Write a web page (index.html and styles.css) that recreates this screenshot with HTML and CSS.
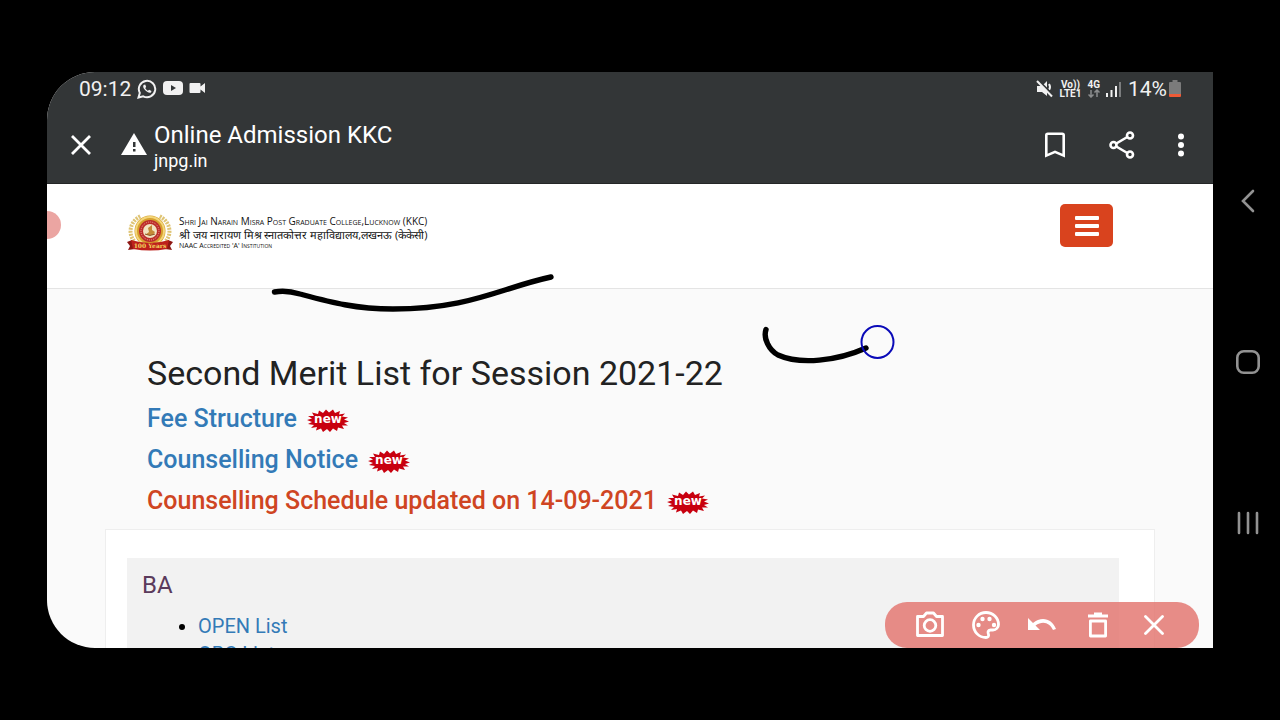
FILE: index.html
```html
<!DOCTYPE html>
<html lang="en">
<head>
<meta charset="utf-8">
<meta name="viewport" content="width=device-width, initial-scale=1">
<title>Online Admission KKC</title>
<link rel="stylesheet" href="styles.css">
</head>
<body>
<svg class="defs" aria-hidden="true">
  <symbol id="burst" viewBox="0 0 44 24">
    <path fill="#c8000f" d="M1 12l5-1.500-4-2.500 6 0-2-3.500 6 1.500 1-3.500 4 2.500 3-3.500 3 3 4-3 2 3.500 5-2-1 3.500 6-1-3 3 6 1-4 2 5 2-5 1.500 4 2.500-6 0 2 3.500-6-1.500-1 3.500-4-2.500-3 3.500-3-3-4 3-2-3.500-5 2 1-3.500-6 1 3-3-6-1 4-2z"/>
  </symbol>
</svg>
<div class="device">
  <main class="screen">
    <div class="status">
      <div class="status-left">
        <span class="clock">09:12</span>
        <svg width="20" height="20" viewBox="0 0 20 20" fill="none" stroke="#f1f1f1" stroke-width="2"><path d="M1.500 18.500l1.300-4.600A8.200 8.200 0 1 1 6.200 17.300z"/><path d="M6.500 6c-1 2 .5 4 2 5.500s3.500 2.800 5.500 2l.5-1.600-2.400-1.200-1.200 1.100c-1.200-.5-2.200-1.500-2.700-2.700l1-1L8.200 5.500z" fill="#f1f1f1" stroke="none"/></svg>
        <svg width="20" height="16" viewBox="0 0 20 16"><rect y="0" width="20" height="14" rx="4" fill="#f1f1f1"/><path d="M8 4v6l5-3z" fill="#333637"/></svg>
        <svg width="16" height="14" viewBox="0 0 16 14" fill="#f1f1f1"><path d="M1.500 1h9q1 0 1 1v2.500L16 1v10l-4.500-3.500V10q0 1-1 1h-9q-1 0-1-1V2q0-1 1-1z"/></svg>
      </div>
      <div class="status-right">
        <svg width="18" height="18" viewBox="0 0 18 18"><path d="M1 6h5l5-5v15l-5-4H1z" fill="#f1f1f1"/><path d="M13 4q2 3 0 6" fill="none" stroke="#f1f1f1" stroke-width="2"/><path d="M2 0l16 16" stroke="#333637" stroke-width="2"/><path d="M1 1l15 15.500" stroke="#f1f1f1" stroke-width="2"/></svg>
        <span class="stack"><span>Vo))</span><span>LTE1</span></span>
        <span class="stack"><span>4G</span><svg width="12" height="9" viewBox="0 0 12 9" fill="none" stroke="#8b8d8e" stroke-width="1.500"><path d="M3 1v7M.5 5.500L3 8l2.500-2.500M9 8V1M6.500 3.500L9 1l2.500 2.500"/></svg></span>
        <svg width="16" height="18" viewBox="0 0 16 18"><path d="M0 13h2v4H0zM4.500 10h2v7h-2zM9 6h2v11H9z" fill="#f1f1f1"/><path d="M13 2h2v15h-2z" fill="#7b7d7e"/></svg>
        <span class="battery">14%<svg width="12" height="18" viewBox="0 0 12 18"><path d="M3.500 0h5v2H11q1 0 1 1v11H0V3q0-1 1-1h2.500z" fill="#7b7b7b"/><path d="M0 14h12v2q0 1-1 1H1q-1 0-1-1z" fill="#ee5a36"/></svg></span>
      </div>
    </div>
    <header class="toolbar">
      <button class="icon-btn" aria-label="Close"><svg width="22" height="22" viewBox="0 0 22 22" stroke="#fff" stroke-width="2.800"><path d="M2 2l18 18M20 2L2 20"/></svg></button>
      <svg class="warn" width="26" height="23" viewBox="0 0 26 23"><path d="M13 0l13 22H0z" fill="#fff"/><path d="M12 9h2.500v5H12zM12 16h2.500v2.500H12z" fill="#333637"/></svg>
      <div class="page-id"><span class="page-title">Online Admission KKC</span><span class="page-host">jnpg.in</span></div>
      <div class="tools">
        <button class="icon-btn" aria-label="Bookmark"><svg width="22" height="26" viewBox="0 0 22 26" fill="none" stroke="#fff" stroke-width="2.600"><path d="M2.300 3.300q0-1.500 1.500-1.500h14.400q1.500 0 1.500 1.500v20.300L11 19.800l-8.700 3.800z"/></svg></button>
        <button class="icon-btn" aria-label="Share"><svg width="26" height="28" viewBox="0 0 26 28" fill="none" stroke="#fff" stroke-width="2.600"><circle cx="4.500" cy="14" r="3"/><circle cx="21" cy="4.500" r="3"/><circle cx="21" cy="23.500" r="3"/><path d="M7.300 12.500l11-6.500M7.300 15.500l11 6.500"/></svg></button>
        <button class="icon-btn" aria-label="More"><svg width="6" height="24" viewBox="0 0 6 24" fill="#fff"><circle cx="3" cy="3.500" r="3"/><circle cx="3" cy="12" r="3"/><circle cx="3" cy="20.500" r="3"/></svg></button>
      </div>
    </header>
    <div class="site-header">
      <svg class="crest" width="46" height="38" viewBox="0 0 46 38">
        <path d="M7 27A19 17 0 0 1 14 2M39 27A19 17 0 0 0 32 2" fill="none" stroke="#dfc474" stroke-width="4" stroke-dasharray="2 1"/>
        <circle cx="23" cy="17" r="15.500" fill="#d6a02e"/><circle cx="23" cy="17" r="14" fill="none" stroke="#f3d67a" stroke-width="2"/>
        <circle cx="23" cy="17" r="11" fill="#bc2b2a"/><circle cx="23" cy="17" r="9" fill="none" stroke="#e7a591" stroke-width="1" stroke-dasharray="1 1"/><circle cx="23" cy="17" r="7" fill="#f2e3c0"/>
        <path d="M18 21l4-3-1-4 4-3v5l3 2-2 3z" fill="#c48a38"/><path d="M18 20q5 3 10 0" fill="none" stroke="#8d5a2b"/>
        <path d="M0 28l5-2 3 9-7 1 2-4zM46 28l-5-2-3 9 7 1-2-4z" fill="#8e1714"/>
        <path d="M4 26q19 6 38 0l-2 9q-17 3-34 0z" fill="#bd211c"/>
        <text x="23" y="34" class="crest-text">100 Years</text>
      </svg>
      <div class="college"><span class="name-en">Shri Jai Narain Misra Post Graduate College,Lucknow (KKC)</span><span class="name-hi" lang="hi">श्री जय नारायण मिश्र स्नातकोत्तर महाविद्यालय,लखनऊ (केकेसी)</span><span class="naac">NAAC Accredited 'A' Institution</span></div>
      <button class="menu-btn" aria-label="Menu"><svg width="24" height="20" viewBox="0 0 24 20" fill="#fff"><rect y="0" width="24" height="4" rx="1"/><rect y="8" width="24" height="4" rx="1"/><rect y="16" width="24" height="4" rx="1"/></svg></button>
    </div>
    <section class="content">
      <div class="notices">
        <h1>Second Merit List for Session 2021-22</h1>
        <p><a href="#">Fee Structure</a><svg class="badge" viewBox="0 0 44 24"><use href="#burst"/><text x="22" y="15" class="badge-text">new</text></svg></p>
        <p><a href="#">Counselling Notice</a><svg class="badge" viewBox="0 0 44 24"><use href="#burst"/><text x="22" y="15" class="badge-text">new</text></svg></p>
        <p><a class="hot" href="#">Counselling Schedule updated on 14-09-2021</a><svg class="badge" viewBox="0 0 44 24"><use href="#burst"/><text x="22" y="15" class="badge-text">new</text></svg></p>
      </div>
      <div class="card"><div class="course">
        <h2>BA</h2>
        <ul><li><a href="#">OPEN List</a></li><li><a href="#">OBC List</a></li></ul>
      </div></div>
    </section>
    <span class="edge-handle"></span>
    <svg class="ink" width="640" height="110" viewBox="260 260 640 110" fill="none" stroke="#000" stroke-width="5.400" stroke-linecap="round" aria-hidden="true">
      <path d="M274.500 292C282 290.500 290 291 300 294C330 302 355 309 393 309C470 309 500 288 551 277"/>
      <path d="M766 329.500C763 338 769 350 778 355C800 365 837 361 866 348"/>
      <circle cx="877.500" cy="342" r="16" stroke="#0a0ab8" stroke-width="2"/>
    </svg>
    <div class="draw-bar">
      <button class="icon-btn" aria-label="Screenshot"><svg width="30" height="28" viewBox="0 0 30 28" fill="none" stroke="#fff" stroke-width="2.800"><path d="M2.500 5.500h6l3-3.500h7l3 3.500h6v19h-25z" stroke-linejoin="round"/><circle cx="15" cy="14.500" r="5.800"/></svg></button>
      <button class="icon-btn" aria-label="Colours"><svg width="30" height="30" viewBox="0 0 30 30"><path d="M15 2.500C8 2.500 2.500 8 2.500 15S8 27.500 15 27.500c2 0 3-1.500 2.500-3-.8-2-.8-4.500 2-4.500H22c3 0 5.500-2.500 5.500-5.500C27.500 8 22 2.500 15 2.500z" fill="none" stroke="#fff" stroke-width="2.800"/><g fill="#fff"><circle cx="7.500" cy="15" r="2.200"/><circle cx="11.500" cy="9" r="2.200"/><circle cx="18.500" cy="9" r="2.200"/><circle cx="23" cy="15" r="2.200"/></g></svg></button>
      <button class="icon-btn" aria-label="Undo"><svg width="30" height="16" viewBox="0 0 30 16"><path d="M1 1v12h12L8.500 8.500C16 3 23 6 26 13l3-1C25 1 14-1 6 6z" fill="#fff"/></svg></button>
      <button class="icon-btn" aria-label="Delete"><svg width="22" height="28" viewBox="0 0 22 28" fill="none" stroke="#fff" stroke-width="2.800"><path d="M1 5h20M7 3h8M3.400 10h15.200v15H3.400z" stroke-linejoin="round"/></svg></button>
      <button class="icon-btn" aria-label="Close drawing"><svg width="20" height="20" viewBox="0 0 20 20" stroke="#fff" stroke-width="2.800" stroke-linecap="round"><path d="M1.500 1.500l17 17M18.500 1.500l-17 17"/></svg></button>
    </div>
  </main>
  <nav class="sysnav" aria-label="System">
    <button class="icon-btn" aria-label="Back"><svg width="24" height="24" viewBox="0 0 24 24" fill="none" stroke="#929292" stroke-width="2.600" stroke-linecap="round"><path d="M17 2L7 12l10 10"/></svg></button>
    <button class="icon-btn" aria-label="Home"><svg width="24" height="24" viewBox="0 0 24 24" fill="none" stroke="#929292" stroke-width="2.600"><rect x="1.300" y="1.300" width="21.400" height="21.400" rx="6.500"/></svg></button>
    <button class="icon-btn" aria-label="Recents"><svg width="24" height="24" viewBox="0 0 24 24" stroke="#929292" stroke-width="2.600" stroke-linecap="round"><path d="M3 2v20M12 2v20M21 2v20"/></svg></button>
  </nav>
</div>
</body>
</html>
```
FILE: styles.css
```css
* { box-sizing: border-box; }
body { margin: 0; background: #000; font-family: Roboto, sans-serif; }
a { color: #337ab7; text-decoration: none; }
svg { display: block; flex: none; }
h1, h2, p, ul { margin: 0; }
.defs { position: absolute; width: 0; height: 0; }
.device { display: grid; grid-template-columns: minmax(0, 1fr) 67px; height: 100vh; padding: 72px 0 72px 47px; }
.screen { position: relative; display: flex; flex-direction: column; overflow: hidden; border-radius: 48px 0 0 48px; background: #fafafa; }
.icon-btn { display: grid; place-items: center; flex: none; padding: 0; border: 0; background: none; }

.status { display: flex; flex: none; justify-content: space-between; height: 34px; padding: 0 32px; background: #333637; color: #f1f1f1; }
.status-left, .status-right { display: flex; align-items: center; gap: 6px; }
.clock, .battery { font-size: 21px; line-height: 36px; }
.battery { display: flex; align-items: center; gap: 2px; }
.stack { display: flex; flex-direction: column; align-items: center; font-size: 10px; font-weight: 700; line-height: 9px; }

.toolbar { display: flex; flex: none; align-items: center; height: 78px; padding: 0 29px 0 23px; background: #333637; color: #fff; border-bottom: 1px solid #242627; }
.warn { margin: 0 7px 0 29px; }
.page-id { display: flex; flex-direction: column; flex: 1; padding-top: 4px; }
.page-title { font-size: 24px; line-height: 28px; }
.page-host { font-size: 18px; line-height: 24px; }
.tools { display: flex; align-items: center; gap: 43px; }

.site-header { display: flex; flex: none; align-items: flex-start; height: 105px; padding: 20px 100px 0 80px; background: #fff; border-bottom: 1px solid #e4e4e4; }
.crest { margin: 10px 6px 0 0; overflow: visible; }
.crest-text { font: 700 6px "DejaVu Serif", serif; fill: #f4d45f; text-anchor: middle; }
.college { display: flex; flex: 1; flex-direction: column; margin-top: 11px; color: #111; font-family: "Open Sans", sans-serif; white-space: nowrap; }
.name-en { font-size: 10px; line-height: 13px; font-variant: small-caps; }
.name-hi { font-size: 11px; line-height: 13px; }
.naac { font-size: 7px; line-height: 10px; font-variant: small-caps; }
.menu-btn { display: grid; place-items: center; width: 53px; height: 43px; padding: 0; border: 0; border-radius: 5px; background: #d9431e; }

.content { padding: 59px 58px 0; }
.notices { padding: 0 42px; font-size: 25px; font-weight: 500; }
.notices h1 { color: #222; font-size: 34px; font-weight: 400; line-height: 50px; }
.notices p { display: flex; align-items: center; gap: 9px; line-height: 41px; }
.notices .hot { color: #cf4522; }
.badge { width: 44px; height: 24px; margin-top: 3px; }
.badge-text { font: 700 12px "DejaVu Sans", sans-serif; fill: #fff; text-anchor: middle; }
.card { margin-top: 8px; padding: 28px 35px 0 21px; border: 1px solid #eee; background: #fff; }
.course { padding: 13px 15px; background: #f2f2f2; }
.course h2 { color: #5b3b5c; font-size: 24px; font-weight: 400; line-height: 28px; }
.course ul { margin-top: 13px; padding-left: 56px; font-size: 20px; line-height: 28px; }

.edge-handle { position: absolute; top: 139px; left: -14px; width: 28px; height: 28px; border-radius: 50%; background: #eba5a2; }
.ink { position: absolute; top: 188px; left: 213px; }
.draw-bar { position: absolute; right: 14px; bottom: 0; display: grid; grid-template-columns: repeat(5, 56px); justify-content: center; width: 314px; height: 46px; border-radius: 22px; background: rgba(226, 112, 106, .8); }
.sysnav { display: grid; grid-template-rows: repeat(3, 161px); align-content: center; justify-items: center; padding: 4px 0 0 2px; }
```
